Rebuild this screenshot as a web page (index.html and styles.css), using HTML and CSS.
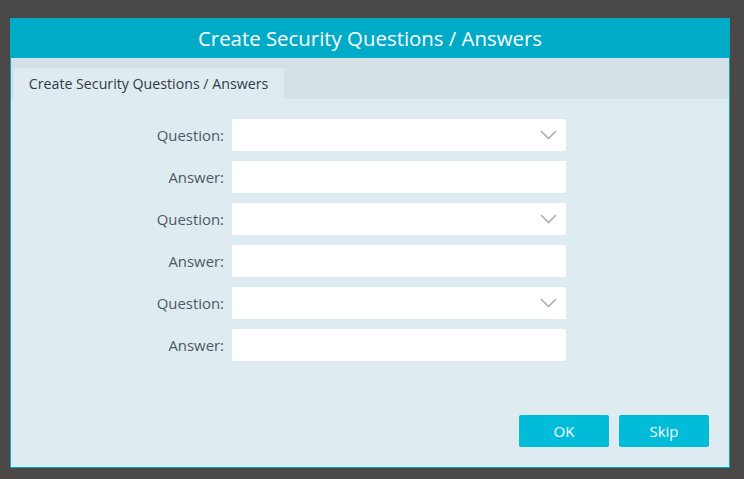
FILE: index.html
```html
<!DOCTYPE html>
<html>
<head>
<meta charset="utf-8">
<link rel="stylesheet" href="styles.css">
</head>
<body>
<div class="dialog">
  <div class="header">Create Security Questions / Answers</div>
  <div class="tabs"><div class="tab">Create Security Questions / Answers</div></div>
  <div class="content">
    <div class="form">
      <label class="lbl">Question:</label>
      <div class="field select"><svg class="chev" width="17" height="10" viewBox="0 0 17 10"><path d="M1 1 L8.5 8.5 L16 1" fill="none" stroke="#a3b2bd" stroke-width="1.6"/></svg></div>
      <label class="lbl">Answer:</label>
      <div class="field"></div>
      <label class="lbl">Question:</label>
      <div class="field select"><svg class="chev" width="17" height="10" viewBox="0 0 17 10"><path d="M1 1 L8.5 8.5 L16 1" fill="none" stroke="#a3b2bd" stroke-width="1.6"/></svg></div>
      <label class="lbl">Answer:</label>
      <div class="field"></div>
      <label class="lbl">Question:</label>
      <div class="field select"><svg class="chev" width="17" height="10" viewBox="0 0 17 10"><path d="M1 1 L8.5 8.5 L16 1" fill="none" stroke="#a3b2bd" stroke-width="1.6"/></svg></div>
      <label class="lbl">Answer:</label>
      <div class="field"></div>
    </div>
    <div class="actions">
      <button class="btn">OK</button>
      <button class="btn">Skip</button>
    </div>
  </div>
</div>
</body>
</html>
```
FILE: styles.css
```css
html, body { margin: 0; padding: 0; }
body {
  background: #4a4846;
  width: 744px;
  height: 479px;
  overflow: hidden;
  font-family: "Open Sans", "Noto Sans", sans-serif;
}
.dialog {
  margin: 18px 0 0 10px;
  width: 718px;
  height: 449px;
  border: 1px solid #00abc8;
  border-top: none;
  background: #deebf0;
  display: flex;
  flex-direction: column;
}
.header {
  height: 40px;
  background: #00abc8;
  color: #fff;
  font-size: 20.4px;
  line-height: 40px;
  text-align: center;
  margin: 0 -1px;
}
.tabs {
  height: 41px;
  background: #d6e1e7;
  display: flex;
  align-items: flex-end;
  padding-left: 3px;
}
.tab {
  height: 31px;
  width: 270px;
  background: #deebf0;
  color: #333a44;
  font-size: 14.2px;
  line-height: 31px;
  text-align: center;
  box-sizing: border-box;
  padding-right: 1px;
}
.content {
  flex: 1;
  display: flex;
  flex-direction: column;
  padding: 20px 20px 20px 0;
}
.form {
  display: grid;
  grid-template-columns: 213px 334px;
  grid-auto-rows: 32px;
  row-gap: 10px;
  column-gap: 8px;
}
.lbl {
  text-align: right;
  line-height: 32px;
  font-size: 14.9px;
  color: #505863;
}
.field {
  background: #fff;
  border-radius: 2px;
  position: relative;
}
.chev {
  position: absolute;
  right: 9px;
  top: 11px;
}
.actions {
  margin-top: auto;
  display: flex;
  justify-content: flex-end;
  gap: 10px;
}
.btn {
  width: 90px;
  height: 32px;
  border: none;
  border-radius: 2px;
  background: #00bcd9;
  color: #fff;
  font-family: inherit;
  font-size: 15px;
  padding: 0;
}
```
